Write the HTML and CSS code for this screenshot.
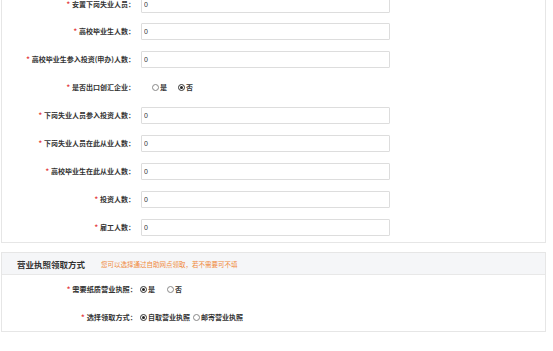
FILE: index.html
```html
<html>
<head>
  <title>投资情况</title>
  <link rel="stylesheet" href="styles.css">
</head>
<body>
  <div class="panel panel-first">
    <div class="row row-top">
      <label class="label"><span class="req">*</span>安置下岗失业人员：</label>
      <input class="field" type="text" value="0">
    </div>
    <div class="row">
      <label class="label"><span class="req">*</span>高校毕业生人数：</label>
      <input class="field" type="text" value="0">
    </div>
    <div class="row">
      <label class="label"><span class="req">*</span>高校毕业生参入投资(申办)人数：</label>
      <input class="field" type="text" value="0">
    </div>
    <div class="row">
      <label class="label"><span class="req">*</span>是否出口创汇企业：</label>
      <div class="radios radios-indent">
        <span class="option"><span class="radio"></span>是</span>
        <span class="option"><span class="radio checked"></span>否</span>
      </div>
    </div>
    <div class="row">
      <label class="label"><span class="req">*</span>下岗失业人员参入投资人数：</label>
      <input class="field" type="text" value="0">
    </div>
    <div class="row">
      <label class="label"><span class="req">*</span>下岗失业人员在此从业人数：</label>
      <input class="field" type="text" value="0">
    </div>
    <div class="row">
      <label class="label"><span class="req">*</span>高校毕业生在此从业人数：</label>
      <input class="field" type="text" value="0">
    </div>
    <div class="row">
      <label class="label"><span class="req">*</span>投资人数：</label>
      <input class="field" type="text" value="0">
    </div>
    <div class="row">
      <label class="label"><span class="req">*</span>雇工人数：</label>
      <input class="field" type="text" value="0">
    </div>
  </div>

  <div class="panel panel-second">
    <div class="panel-head">
      <span class="panel-title">营业执照领取方式</span>
      <span class="panel-hint">您可以选择通过自助网点领取，若不需要可不填</span>
    </div>
    <div class="row">
      <label class="label label-wide"><span class="req">*</span>需要纸质营业执照：</label>
      <div class="radios">
        <span class="option"><span class="radio checked"></span>是</span>
        <span class="option"><span class="radio"></span>否</span>
      </div>
    </div>
    <div class="row">
      <label class="label label-wide"><span class="req">*</span>选择领取方式：</label>
      <div class="radios radios-tight">
        <span class="option"><span class="radio checked"></span>自取营业执照</span>
        <span class="option"><span class="radio"></span>邮寄营业执照</span>
      </div>
    </div>
  </div>
</body>
</html>
```

FILE: styles.css
```css
body {
  margin: 0;
  background: #fff;
  font-family: "Noto Sans CJK SC", "Liberation Sans", sans-serif;
  font-size: 7px;
  color: #333;
  overflow: hidden;
}
.panel {
  margin: 0 7px 0 1px;
  border: 1px solid #e6e6e6;
  background: #fff;
}
.panel-first {
  margin-top: -10px;
  padding-bottom: 1px;
}
.panel-second {
  margin-top: 9px;
}
.row {
  height: 28px;
  display: flex;
  align-items: center;
}
.row-top {
  height: 26px;
}
.label {
  flex: 0 0 133px;
  text-align: right;
  line-height: 10px;
  font-weight: 600;
  color: #333;
}
.label-wide {
  flex-basis: 135px;
  font-size: 7.2px;
}
.req {
  color: #e4393c;
  margin-right: 2px;
}
.field {
  margin-left: 6px;
  width: 249px;
  height: 17px;
  box-sizing: border-box;
  border: 1px solid #ddd;
  border-radius: 1px;
  padding: 0 2px;
  font-family: "Liberation Sans", sans-serif;
  font-size: 7px;
  color: #333;
  outline: none;
}
.radios {
  display: flex;
  gap: 12px;
  margin-left: 3px;
  font-weight: 600;
}
.radios-indent {
  margin-left: 17px;
  gap: 11px;
}
.radios-tight {
  gap: 3px;
}
.option {
  display: flex;
  align-items: center;
  line-height: 10px;
}
.radio {
  width: 5px;
  height: 5px;
  border: 1px solid #888;
  border-radius: 50%;
  margin-right: 1px;
  position: relative;
}
.radio.checked {
  border-color: #333;
}
.radio.checked::after {
  content: "";
  position: absolute;
  left: 1px;
  top: 1px;
  width: 3px;
  height: 3px;
  border-radius: 50%;
  background: #222;
}
.panel-head {
  height: 21px;
  background: #f5f6f8;
  border-bottom: 1px solid #e8e8e8;
  display: flex;
  align-items: center;
  padding-left: 15px;
}
.panel-title {
  font-size: 8.5px;
  font-weight: bold;
  color: #333;
}
.panel-hint {
  margin-left: 16px;
  font-size: 6.5px;
  color: #f08a3c;
}
```
